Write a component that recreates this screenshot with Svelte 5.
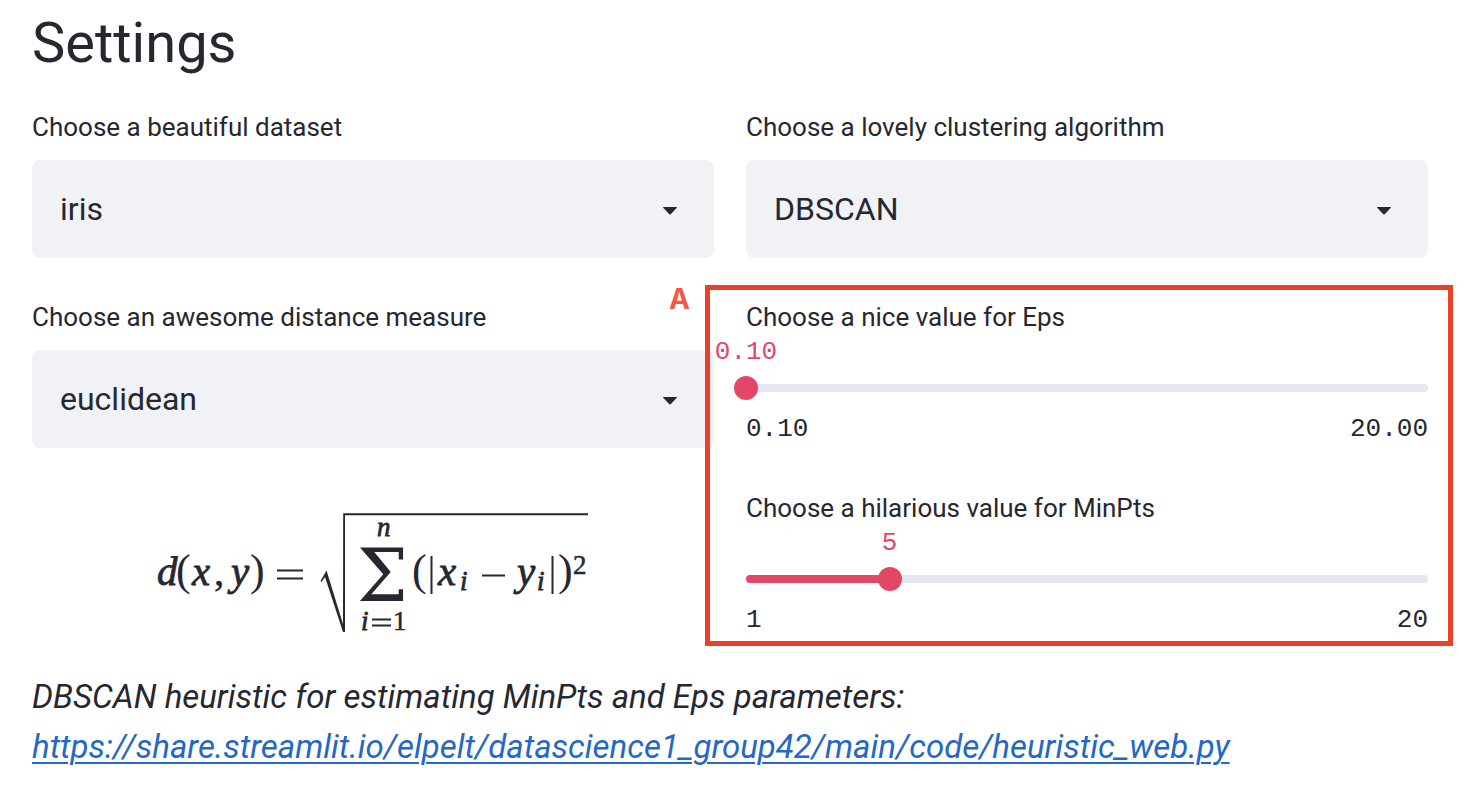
<script>
  let dataset = $state('iris');
  let algorithm = $state('DBSCAN');
  let distance = $state('euclidean');
  let eps = $state(0.1);
  let minPts = $state(5);

  const share = (value, min, max) => ((value - min) / (max - min)) * 100;
  const heuristicUrl =
    'https://share.streamlit.io/elpelt/datascience1_group42/main/code/heuristic_web.py';
</script>

{#snippet arrow()}
  <svg class="arrow" viewBox="0 0 16 10" aria-hidden="true">
    <path d="M1.6 1H14.4Q15.4 1 14.8 1.8L9.2 7.8Q8 9 6.8 7.8L1.2 1.8Q.6 1 1.6 1Z" />
  </svg>
{/snippet}

<main>
  <h1>Settings</h1>

  <div class="columns">
    <div class="column">
      <div class="field">
        <label for="dataset">Choose a beautiful dataset</label>
        <div class="select">
          <select id="dataset" bind:value={dataset}>
            <option>iris</option>
          </select>
          {@render arrow()}
        </div>
      </div>

      <div class="field">
        <label for="distance">Choose an awesome distance measure</label>
        <div class="select">
          <select id="distance" bind:value={distance}>
            <option>euclidean</option>
          </select>
          {@render arrow()}
        </div>
      </div>

      <svg class="formula" viewBox="148 490 450 149" role="math" aria-label="Euclidean distance">
        <g class="italic">
          <text x="157" y="585">d</text>
          <text x="192" y="585">x</text>
          <text x="231" y="585">y</text>
          <text x="438" y="585">x</text>
          <text x="517" y="585">y</text>
        </g>
        <g class="roman">
          <text x="214" y="585">,</text>
          <text x="573" y="574" class="small">2</text>
          <text x="393" y="630" class="small">1</text>
        </g>
        <g class="paren">
          <text x="176" y="585">(</text>
          <text x="250" y="585">)</text>
          <text x="412" y="585">(</text>
          <text x="558" y="585">)</text>
        </g>
        <g class="italic small">
          <text x="377" y="536">n</text>
          <text x="361" y="630">i</text>
          <text x="460" y="590">i</text>
          <text x="537" y="590">i</text>
        </g>
        <text class="sum" x="357" y="601">Σ</text>
        <path
          class="rule"
          d="M277 570.5H303M277 578.5H303M372 619.5H391M372 625.5H391M482 575.5H505M431.5 556V594M552.5 556V594"
        />
        <path class="root" d="M320.5 581L326.5 570.5L343 624L343.2 513.2H588V515.2H345V632H343L325 577L321.5 582Z" />
      </svg>
    </div>

    <div class="column">
      <div class="field">
        <label for="algorithm">Choose a lovely clustering algorithm</label>
        <div class="select">
          <select id="algorithm" bind:value={algorithm}>
            <option>DBSCAN</option>
          </select>
          {@render arrow()}
        </div>
      </div>

      <div class="sliders">
        <div class="slider">
          <label for="eps">Choose a nice value for Eps</label>
          <div class="current">
            <output for="eps" style:left="{share(eps, 0.1, 20)}%">{eps.toFixed(2)}</output>
          </div>
          <div class="track" style:--fill="{share(eps, 0.1, 20)}%">
            <span class="rail"></span>
            <input id="eps" type="range" min="0.1" max="20" step="0.1" bind:value={eps} />
          </div>
          <div class="ends"><span>0.10</span><span>20.00</span></div>
        </div>

        <div class="slider">
          <label for="minpts">Choose a hilarious value for MinPts</label>
          <div class="current">
            <output for="minpts" style:left="{share(minPts, 1, 20)}%">{minPts}</output>
          </div>
          <div class="track" style:--fill="{share(minPts, 1, 20)}%">
            <span class="rail"></span>
            <input id="minpts" type="range" min="1" max="20" bind:value={minPts} />
          </div>
          <div class="ends"><span>1</span><span>20</span></div>
        </div>

        <div class="marker"><span>A</span></div>
      </div>
    </div>
  </div>

  <p>
    DBSCAN heuristic for estimating MinPts and Eps parameters:<br />
    <a href={heuristicUrl}>{heuristicUrl}</a>
  </p>
</main>

<style>
  :global(body) {
    margin: 0;
    background: #fff;
  }

  main {
    padding: 0 40px 16px 32px;
    color: #262730;
    font-family: Roboto, sans-serif;
    font-size: 32px;
  }

  h1 {
    margin: 0 0 24px;
    font-size: 56px;
    font-weight: 400;
    line-height: 86px;
  }

  .columns {
    display: grid;
    grid-template-columns: 1fr 1fr;
    gap: 32px;
  }

  .column {
    display: flex;
    flex-direction: column;
    gap: 42px;
    min-width: 0;
  }

  .field {
    display: flex;
    flex-direction: column;
    gap: 16px;
  }

  label {
    font-size: 26px;
    line-height: 34px;
  }

  .select {
    display: grid;
    align-items: center;
  }

  .select > * {
    grid-area: 1 / 1;
  }

  select {
    appearance: none;
    width: 100%;
    height: 98px;
    padding: 0 72px 0 28px;
    border: 0;
    border-radius: 8px;
    background: #f0f2f6;
    color: inherit;
    font: inherit;
  }

  .arrow {
    justify-self: end;
    width: 16px;
    height: 10px;
    margin-right: 36px;
    margin-top: 4px;
    fill: #262730;
    pointer-events: none;
  }

  .formula {
    align-self: center;
    width: 450px;
    max-width: 100%;
    fill: #262730;
    font-family: "Liberation Serif", serif;
    font-size: 41px;
  }

  .formula text {
    stroke: #262730;
    stroke-width: 0.5px;
  }

  .italic {
    font-style: italic;
  }

  .small {
    font-size: 27px;
  }

  .formula .italic text {
    stroke-width: 0.8px;
  }

  .paren {
    font-size: 44px;
  }

  .formula .paren text {
    stroke-width: 0;
  }

  .formula .sum {
    font-family: "DejaVu Serif", serif;
    font-size: 72px;
    stroke-width: 0;
  }

  .rule {
    stroke: #262730;
    stroke-width: 2;
  }

  .sliders {
    position: relative;
    display: flex;
    flex-direction: column;
    gap: 41px;
  }

  .slider {
    display: flex;
    flex-direction: column;
  }

  .current {
    position: relative;
    height: 34px;
  }

  output,
  .ends {
    font-family: "Liberation Mono", monospace;
    font-size: 26px;
  }

  output {
    position: absolute;
    line-height: 36px;
    color: #e24768;
    transform: translateX(-50%);
  }

  .track {
    display: grid;
    align-items: center;
    height: 40px;
  }

  .track > * {
    grid-area: 1 / 1;
  }

  .rail {
    height: 8px;
    border-radius: 4px;
    background: linear-gradient(to right, #e24768 var(--fill), #e4e7ef var(--fill));
  }

  input {
    appearance: none;
    height: 24px;
    margin: 0 -12px;
    background: transparent;
  }

  input::-webkit-slider-thumb {
    appearance: none;
    width: 24px;
    height: 24px;
    border: 0;
    border-radius: 50%;
    background: #e24768;
  }

  .ends {
    display: flex;
    justify-content: space-between;
    line-height: 42px;
  }

  .marker {
    position: absolute;
    inset: -15px -25px -5px -41px;
    border: 5px solid #ed4029;
    pointer-events: none;
  }

  .marker span {
    position: absolute;
    top: -8px;
    right: 100%;
    margin-right: 20px;
    color: #ef5a49;
    font-family: Inter, sans-serif;
    font-size: 28px;
    font-weight: 700;
    line-height: 34px;
  }

  p {
    margin: 31px 0 0;
    font-size: 33px;
    font-style: italic;
    line-height: 50px;
    overflow-wrap: anywhere;
  }

  a {
    color: #2468c4;
    text-decoration-thickness: 2px;
    text-underline-offset: 4px;
  }
</style>
